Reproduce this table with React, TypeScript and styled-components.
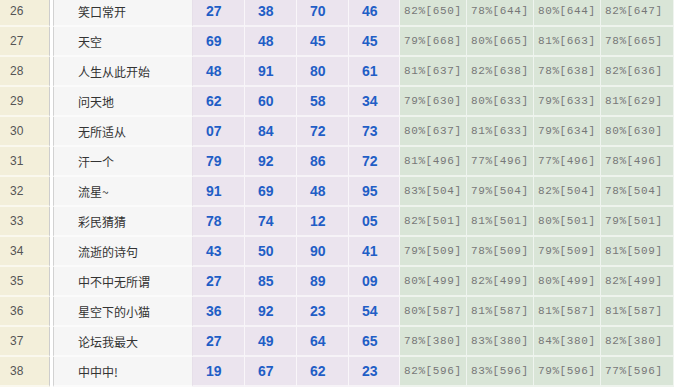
import React from 'react';
import styled, { createGlobalStyle } from 'styled-components';

interface Player {
  rank: number;
  name: string;
  picks: string[];
  rates: string[];
}

const players: Player[] = [
  { rank: 26, name: '笑口常开', picks: ['27', '38', '70', '46'], rates: ['82%[650]', '78%[644]', '80%[644]', '82%[647]'] },
  { rank: 27, name: '天空', picks: ['69', '48', '45', '45'], rates: ['79%[668]', '80%[665]', '81%[663]', '78%[665]'] },
  { rank: 28, name: '人生从此开始', picks: ['48', '91', '80', '61'], rates: ['81%[637]', '82%[638]', '78%[638]', '82%[636]'] },
  { rank: 29, name: '问天地', picks: ['62', '60', '58', '34'], rates: ['79%[630]', '80%[633]', '79%[633]', '81%[629]'] },
  { rank: 30, name: '无所适从', picks: ['07', '84', '72', '73'], rates: ['80%[637]', '81%[633]', '79%[634]', '80%[630]'] },
  { rank: 31, name: '汗一个', picks: ['79', '92', '86', '72'], rates: ['81%[496]', '77%[496]', '77%[496]', '78%[496]'] },
  { rank: 32, name: '流星~', picks: ['91', '69', '48', '95'], rates: ['83%[504]', '79%[504]', '82%[504]', '78%[504]'] },
  { rank: 33, name: '彩民猜猜', picks: ['78', '74', '12', '05'], rates: ['82%[501]', '81%[501]', '80%[501]', '79%[501]'] },
  { rank: 34, name: '流逝的诗句', picks: ['43', '50', '90', '41'], rates: ['79%[509]', '78%[509]', '79%[509]', '81%[509]'] },
  { rank: 35, name: '中不中无所谓', picks: ['27', '85', '89', '09'], rates: ['80%[499]', '82%[499]', '80%[499]', '82%[499]'] },
  { rank: 36, name: '星空下的小猫', picks: ['36', '92', '23', '54'], rates: ['80%[587]', '81%[587]', '81%[587]', '81%[587]'] },
  { rank: 37, name: '论坛我最大', picks: ['27', '49', '64', '65'], rates: ['78%[380]', '83%[380]', '84%[380]', '82%[380]'] },
  { rank: 38, name: '中中中!', picks: ['19', '67', '62', '23'], rates: ['82%[596]', '83%[596]', '79%[596]', '77%[596]'] },
];

const App: React.FC = () => (
  <>
    <GlobalStyle />
    <Board>
      {players.map((p) => (
        <Row key={p.rank}>
          <RankCell>{p.rank}</RankCell>
          <NameCell>{p.name}</NameCell>
          {p.picks.map((n, i) => (
            <PickCell key={`p${i}`}>{n}</PickCell>
          ))}
          {p.rates.map((r, i) => (
            <RateCell key={`r${i}`}>{r}</RateCell>
          ))}
        </Row>
      ))}
    </Board>
  </>
);

const GlobalStyle = createGlobalStyle`
  html, body {
    margin: 0;
    padding: 0;
    background: #ffffff;
    overflow: hidden;
  }
`;

const Board = styled.div`
  width: 674px;
  margin-top: -3px;
`;

const Row = styled.div`
  display: grid;
  grid-template-columns: 53px 140px 52px 52px 52px 51px 67px 67px 67px 1fr;
  height: 30px;
`;

const Cell = styled.div`
  box-sizing: border-box;
  display: flex;
  align-items: center;
  height: 30px;
  border-bottom: 2px solid rgba(255, 255, 255, 0.55);
  white-space: nowrap;
`;

const RankCell = styled(Cell)`
  margin-right: 3px;
  padding-left: 10px;
  background: #f3efda;
  border-right: 1px solid #cdcdcd;
  font-family: 'Liberation Sans', Arial, sans-serif;
  font-size: 12px;
  color: #555;
`;

const NameCell = styled(Cell)`
  padding-left: 24px;
  background: #f6f6f6;
  border-left: 1px solid #d2d2d2;
  border-right: 1px solid #e6dfe9;
  font-family: 'Noto Sans CJK SC', sans-serif;
  font-size: 12px;
  color: #333;
`;

const PickCell = styled(Cell)`
  padding-left: 13px;
  background: #ebe4ee;
  border-right: 1px solid rgba(255, 255, 255, 0.7);
  font-family: 'Liberation Sans', Arial, sans-serif;
  font-weight: 700;
  font-size: 14px;
  color: #1f5ec6;
`;

const RateCell = styled(Cell)`
  padding-left: 4px;
  background: #d9e5d7;
  border-right: 1px solid rgba(255, 255, 255, 0.6);
  font-family: 'Liberation Mono', 'Courier New', monospace;
  font-size: 11px;
  letter-spacing: 0.6px;
  color: #777;
`;

export default App;
